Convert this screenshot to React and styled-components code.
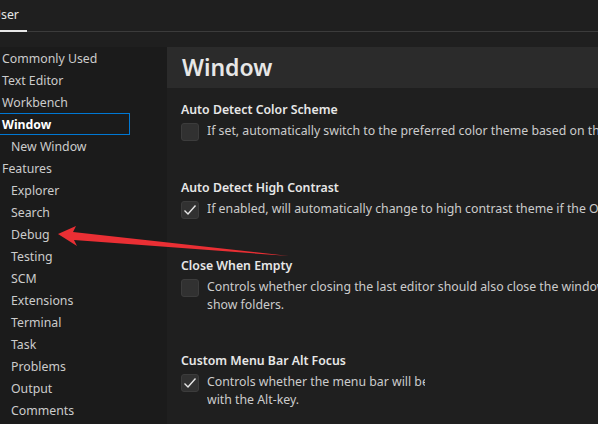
import React from 'react';
import styled, { createGlobalStyle } from 'styled-components';

const GlobalStyle = createGlobalStyle`
  body {
    margin: 0;
    background: #1f1f1f;
    font-family: "Noto Sans", "Open Sans", sans-serif;
    -webkit-font-smoothing: antialiased;
  }
`;

const TOC = [
  { label: 'Commonly Used' },
  { label: 'Text Editor' },
  { label: 'Workbench' },
  { label: 'Window', active: true },
  { label: 'New Window', indent: true },
  { label: 'Features' },
  { label: 'Explorer', indent: true },
  { label: 'Search', indent: true },
  { label: 'Debug', indent: true },
  { label: 'Testing', indent: true },
  { label: 'SCM', indent: true },
  { label: 'Extensions', indent: true },
  { label: 'Terminal', indent: true },
  { label: 'Task', indent: true },
  { label: 'Problems', indent: true },
  { label: 'Output', indent: true },
  { label: 'Comments', indent: true },
];

const SETTINGS = [
  {
    title: 'Auto Detect Color Scheme',
    checked: false,
    lines: ['If set, automatically switch to the preferred color theme based on the OS appearance.'],
  },
  {
    title: 'Auto Detect High Contrast',
    checked: true,
    lines: ['If enabled, will automatically change to high contrast theme if the OS is using a high contrast theme.'],
  },
  {
    title: 'Close When Empty',
    checked: false,
    lines: [
      'Controls whether closing the last editor should also close the window. This setting only applies for windows that do not',
      'show folders.',
    ],
  },
  {
    title: 'Custom Menu Bar Alt Focus',
    checked: true,
    clip: 218,
    lines: ['Controls whether the menu bar will be focused by pressing', 'with the Alt-key.'],
  },
];

export default function App() {
  return (
    <>
      <GlobalStyle />
      <Page>
        <TabBar>
          <Tab>User</Tab>
        </TabBar>
        <Body>
          <Sidebar>
            {TOC.map((item) => (
              <TocItem key={item.label} indent={item.indent} active={item.active}>
                {item.label}
              </TocItem>
            ))}
          </Sidebar>
          <Main>
            <Heading>Window</Heading>
            <SettingList>
              {SETTINGS.map((s) => (
                <Setting key={s.title}>
                  <Title>{s.title}</Title>
                  <Row>
                    <Checkbox>{s.checked && <CheckIcon />}</Checkbox>
                    <Description clip={s.clip}>
                      {s.lines.map((line) => (
                        <Line key={line}>{line}</Line>
                      ))}
                    </Description>
                  </Row>
                </Setting>
              ))}
            </SettingList>
          </Main>
        </Body>
        <Arrow viewBox="0 0 598 424">
          <polygon points="58,234 76,226 73,232 289,256 74,240 77,246" fill="#ea2f34" />
        </Arrow>
      </Page>
    </>
  );
}

function CheckIcon() {
  return (
    <svg width="16" height="16" viewBox="0 0 16 16">
      <path d="M2.5 8.5 L6 12 L13.5 3.5" fill="none" stroke="#e6e6e6" strokeWidth="1.4" />
    </svg>
  );
}

const Page = styled.div`
  position: relative;
  width: 598px;
  height: 424px;
  overflow: hidden;
  display: flex;
  flex-direction: column;
  color: #cccccc;
  font-size: 12.3px;
`;

const TabBar = styled.div`
  height: 31px;
  flex-shrink: 0;
  display: flex;
  border-bottom: 1px solid #3b3b3b;
`;

const Tab = styled.div`
  margin-left: -8px;
  padding: 0 8px 0 0;
  line-height: 30px;
  color: #e7e7e7;
  border-bottom: 2px solid #e7e7e7;
  margin-bottom: -1px;
`;

const Body = styled.div`
  flex: 1;
  display: flex;
  padding-top: 15px;
  min-height: 0;
`;

const Sidebar = styled.div`
  width: 167px;
  flex-shrink: 0;
  background: #1b1b1b;
`;

const TocItem = styled.div`
  height: 22px;
  line-height: 21px;
  width: 130px;
  box-sizing: border-box;
  padding-left: ${(p) => (p.indent ? '11px' : '2px')};
  font-weight: ${(p) => (p.active ? 700 : 400)};
  color: ${(p) => (p.active ? '#ffffff' : '#cccccc')};
  border: 1px solid ${(p) => (p.active ? '#0078d4' : 'transparent')};
  border-left: none;
  white-space: nowrap;
`;

const Main = styled.div`
  flex: 1;
  min-width: 0;
`;

const Heading = styled.div`
  height: 41px;
  line-height: 40px;
  padding-left: 15px;
  background: #2b2b2b;
  font-size: 23px;
  font-weight: 600;
  color: #e7e7e7;
`;

const SettingList = styled.div`
  padding: 13px 0 0 14px;
`;

const Setting = styled.div`
  margin-bottom: 38px;
`;

const Title = styled.div`
  line-height: 18px;
  font-weight: 600;
  color: #e7e7e7;
  white-space: nowrap;
`;

const Row = styled.div`
  display: flex;
  gap: 8px;
  margin-top: 3px;
`;

const Checkbox = styled.div`
  width: 18px;
  height: 18px;
  margin-top: 1px;
  box-sizing: border-box;
  flex-shrink: 0;
  border-radius: 3px;
  background: #313131;
  border: 1px solid #3c3c3c;
  display: flex;
  align-items: center;
  justify-content: center;
`;

const Description = styled.div`
  max-width: ${(p) => (p.clip ? `${p.clip}px` : 'none')};
  overflow: hidden;
`;

const Line = styled.div`
  line-height: 18px;
  white-space: nowrap;
  color: #cccccc;
`;

const Arrow = styled.svg`
  position: absolute;
  left: 0;
  top: 0;
  width: 598px;
  height: 424px;
  pointer-events: none;
`;
